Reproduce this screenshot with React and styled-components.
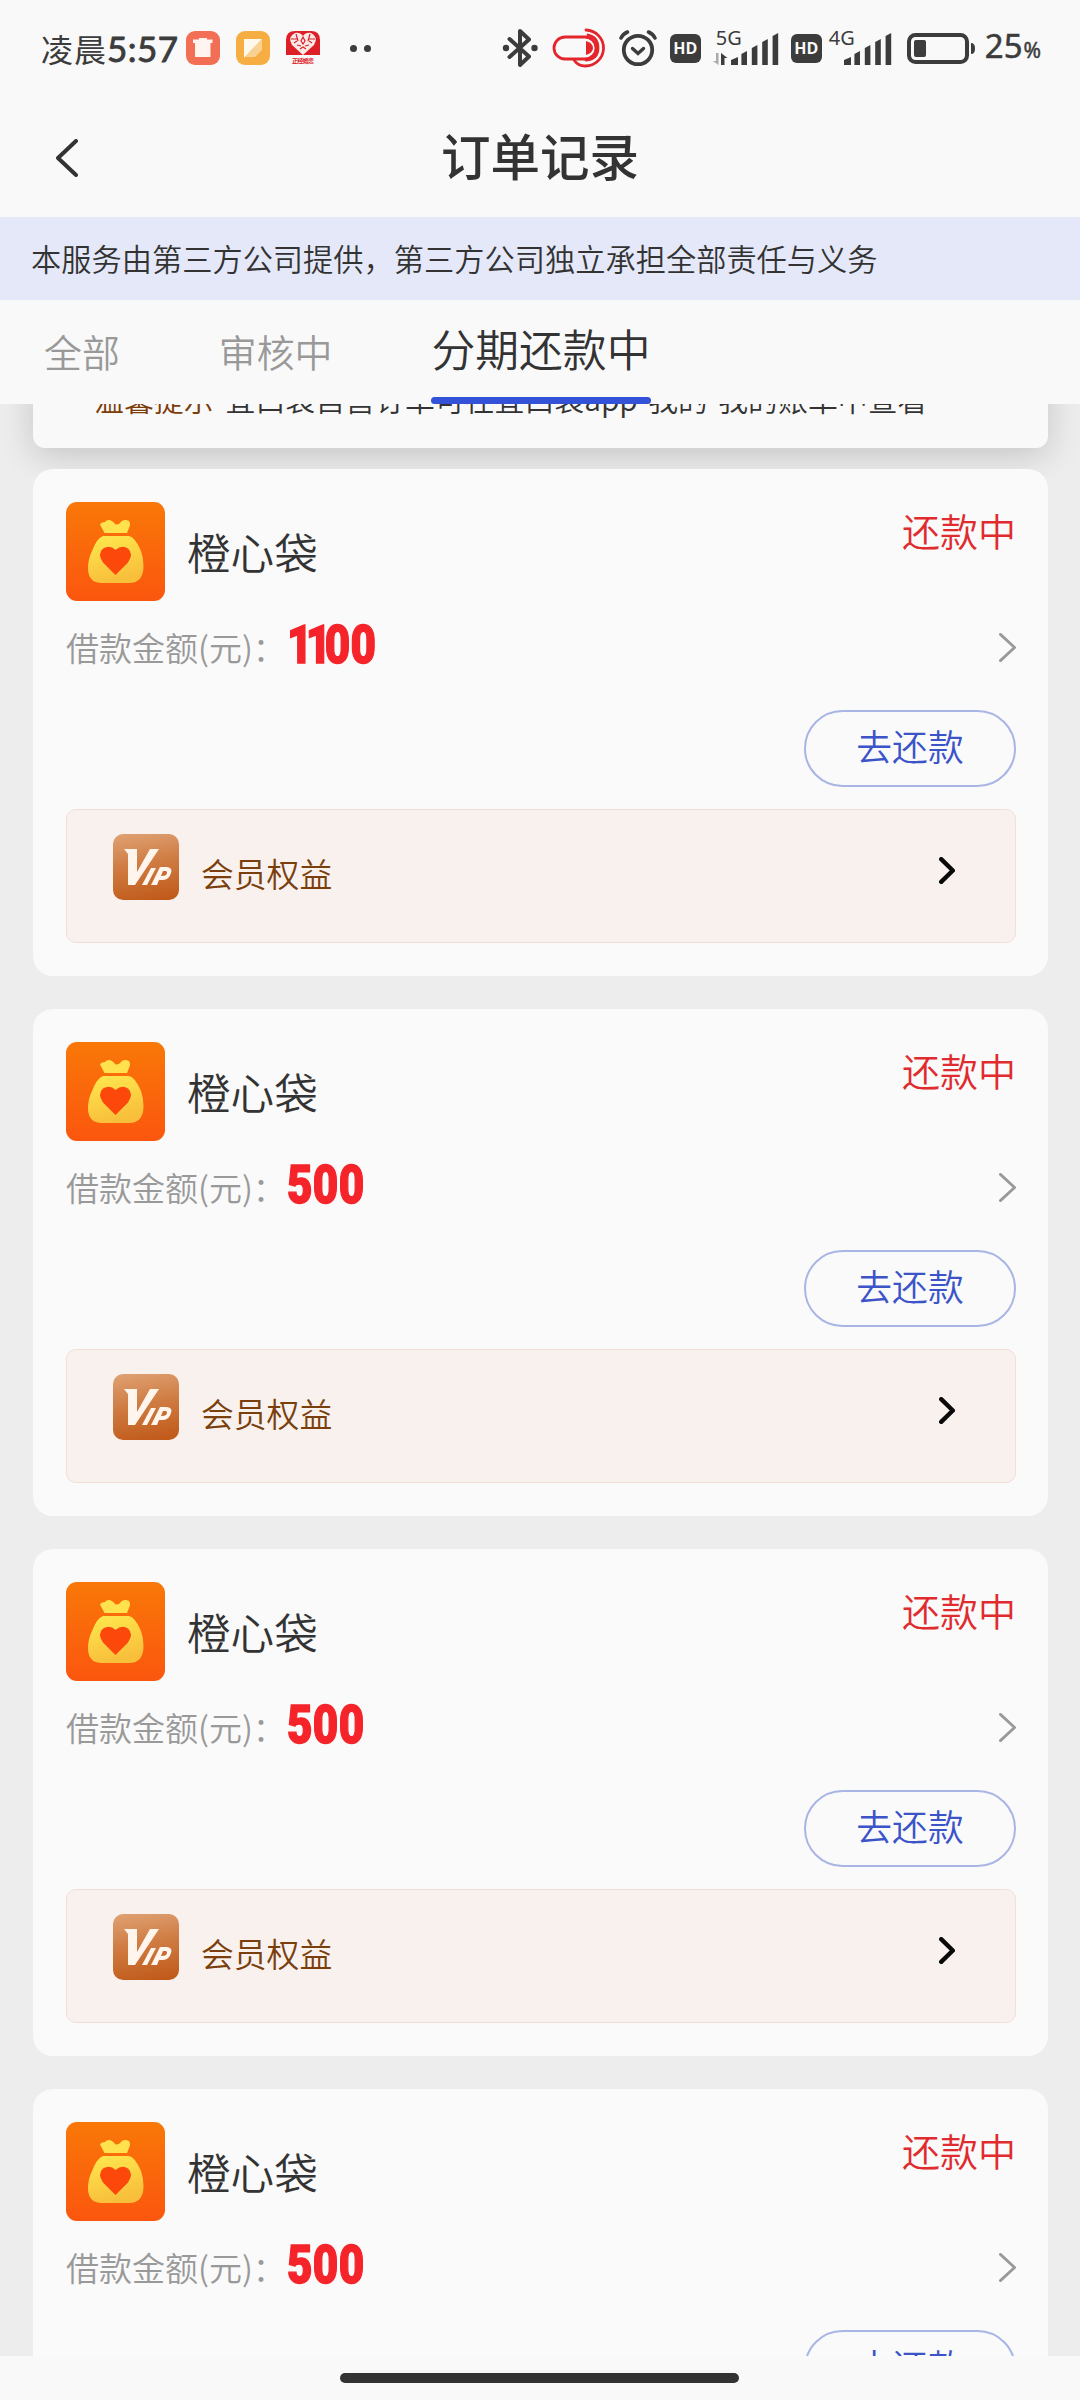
import React from "react";
import styled, { createGlobalStyle } from "styled-components";

const GlobalStyle = createGlobalStyle`
  * { box-sizing: border-box; }
  body {
    margin: 0;
    background: #f9f9f9;
    font-family: "Noto Sans CJK SC", "Noto Sans", sans-serif;
    color: #333;
  }
  svg { display: block; flex: none; }
`;

const Screen = styled.div`
  width: 1080px;
  height: 2400px;
  overflow: hidden;
  display: flex;
  flex-direction: column;
  background: #f9f9f9;
  white-space: nowrap;
`;

const StatusBar = styled.div`
  height: 98px;
  flex: none;
  display: flex;
  align-items: center;
  justify-content: space-between;
  padding: 0 39px 2px 41px;
  color: #3c3c3c;
`;

const StatusGroup = styled.div`
  display: flex;
  align-items: center;
`;

const Clock = styled.div`
  display: flex;
  align-items: center;
  width: 145px;
  line-height: 48px;
  font-size: 32px;
  letter-spacing: 1px;
`;

const ClockDigits = styled.span`
  font-family: Lato, "Noto Sans", sans-serif;
  font-size: 35px;
  font-weight: 400;
  letter-spacing: 0.5px;
  -webkit-text-stroke: 0.9px #3c3c3c;
`;

const AppBadges = styled.div`
  display: flex;
  gap: 16px;
`;

const Dots = styled.div`
  display: flex;
  gap: 7px;
  margin-left: 30px;
`;

const Dot = styled.i`
  width: 7px;
  height: 7px;
  border-radius: 50%;
  background: #3c3c3c;
`;

const HdBadge = styled.div`
  width: 31px;
  height: 29px;
  border-radius: 6px;
  background: #3c3c3c;
  color: #f9f9f9;
  font: 700 16px/28px "Open Sans", sans-serif;
  text-align: center;
  margin-left: ${(p) => p.$gap}px;
`;

const Network = styled.div`
  width: ${(p) => p.$width}px;
  height: 37px;
  display: grid;
  grid-template-areas: "stack";
  margin-left: ${(p) => p.$gap}px;
  margin-bottom: 3px;
  > * { grid-area: stack; }
`;

const NetworkLabel = styled.span`
  font: 400 20px/20px "Noto Sans", sans-serif;
  padding-left: ${(p) => p.$inset}px;
`;

const Percent = styled.div`
  display: flex;
  align-items: baseline;
  margin-left: 9px;
  font: 400 33px/40px "Noto Sans", sans-serif;
  -webkit-text-stroke: 0.5px #3c3c3c;
  small { font-size: 21px; margin-left: 1px; }
`;

const Header = styled.header`
  height: 119px;
  flex: none;
  display: grid;
  grid-template-columns: 120px 1fr 120px;
  align-items: center;
`;

const BackButton = styled.button`
  border: 0;
  background: none;
  padding: 0 0 0 56px;
`;

const PageTitle = styled.h1`
  margin: 0;
  font-size: 49.5px;
  font-weight: 500;
  line-height: 72px;
  padding-bottom: 5px;
  text-align: center;
  color: #333;
`;

const Banner = styled.div`
  height: 83px;
  flex: none;
  padding-left: 31px;
  background: #e5e8f8;
  font-size: 30.24px;
  font-weight: 350;
  line-height: 83px;
  color: #333;
`;

const Tabs = styled.nav`
  height: 104px;
  flex: none;
  display: flex;
  padding-left: 44px;
  background: #f9f9f9;
  position: relative;
  z-index: 1;
`;

const Tab = styled.div`
  display: flex;
  flex-direction: column;
  justify-content: flex-end;
  margin-right: ${(p) => p.$gap}px;
  font-size: ${(p) => (p.$active ? 43.8 : 37.9)}px;
  font-weight: 350;
  color: ${(p) => (p.$active ? "#333" : "#999")};
  span { line-height: ${(p) => (p.$active ? 97 : 106)}px; }
  &::after {
    content: "";
    display: ${(p) => (p.$active ? "block" : "none")};
    height: 8px;
    margin: 0 -1px 0 0;
    border-radius: 4px;
    background: #3352d8;
  }
`;

const Orders = styled.main`
  height: 1952px;
  flex: none;
  overflow: hidden;
  padding: 0 32px 0 33px;
  background: #ededed;
`;

const Notice = styled.div`
  height: 84px;
  margin: -40px 0 21px;
  border-radius: 0 0 12px 12px;
  background: #f9f9f9;
  box-shadow: 0 8px 34px rgba(0, 0, 0, 0.17);
  padding-left: 61px;
  font-size: 29.9px;
  font-weight: 350;
  line-height: 69px;
  display: flex;
  gap: 12px;
`;

const NoticeLead = styled.span`
  color: #7d3d0b;
`;

const Card = styled.article`
  height: 507px;
  margin-bottom: 33px;
  padding: 33px 32px 33px 33px;
  border-radius: 20px;
  background: #fafafa;
`;

const CardHead = styled.div`
  height: 99px;
  display: flex;
  align-items: center;
`;

const BrandName = styled.h2`
  margin: 0 auto 0 22px;
  padding-bottom: 2px;
  font-size: 43.6px;
  font-weight: 350;
  line-height: 60px;
`;

const State = styled.span`
  align-self: flex-start;
  font-size: 38px;
  font-weight: 350;
  line-height: 55px;
  color: #e02b2f;
`;

const AmountRow = styled.div`
  height: 92px;
  display: flex;
  align-items: center;
`;

const AmountLabel = styled.span`
  width: 221px;
  padding-bottom: 1px;
  font-size: 33px;
  font-weight: 350;
  color: #999;
`;

const Amount = styled.strong`
  margin-right: auto;
  font: 900 53px/60px Roboto, sans-serif;
  color: #f5242a;
  padding-bottom: 5px;
  transform: scaleX(0.83);
  transform-origin: left;
  -webkit-text-stroke: 1.4px #f5242a;
`;

const Digits = styled.span`
  letter-spacing: ${(p) => (p.$narrow ? -8 : 0.4)}px;
`;

const Actions = styled.div`
  display: flex;
  justify-content: flex-end;
  margin-top: 17px;
`;

const RepayButton = styled.button`
  width: 212px;
  height: 77px;
  padding: 0 0 8px;
  border: 2px solid #a9b5e4;
  border-radius: 39px;
  background: transparent;
  font: 350 35.8px/50px "Noto Sans CJK SC", sans-serif;
  color: #3c54c8;
`;

const Benefits = styled.div`
  height: 134px;
  margin-top: 22px;
  padding: 24px 60px 0 46px;
  border: 1.5px solid #f3ded5;
  border-radius: 10px;
  background: #f9f1ed;
  display: flex;
  align-items: flex-start;
  justify-content: space-between;
  > svg { margin-top: 23px; }
`;

const BenefitsTitle = styled.div`
  display: flex;
  gap: 22px;
  font-size: 32.8px;
  font-weight: 350;
  color: #7a3f0c;
  span { line-height: 77px; }
`;

const VipBadge = styled.div`
  width: 66px;
  height: 66px;
  border-radius: 10px;
  background: linear-gradient(170deg, #e0a274 0%, #cf7c43 45%, #bf5716 100%);
`;

const HomeArea = styled.footer`
  height: 44px;
  flex: none;
  display: flex;
  padding: 17px 0 0 340px;
`;

const HomeBar = styled.div`
  width: 399px;
  height: 10px;
  border-radius: 5px;
  background: #333;
`;

function Chevron({ width, height, color, stroke, left }) {
  const p = stroke / 2;
  const points = left
    ? `${width - p},${p} ${p},${height / 2} ${width - p},${height - p}`
    : `${p},${p} ${width - p},${height / 2} ${p},${height - p}`;
  return (
    <svg width={width} height={height}>
      <polyline points={points} fill="none" stroke={color} strokeWidth={stroke} strokeLinecap="round" strokeLinejoin="round" />
    </svg>
  );
}

function TrashBadge() {
  return (
    <svg width="34" height="34">
      <rect width="34" height="34" rx="9" fill="#f26f56" />
      <path d="M13 7h8v1.500h5.500v3.500h-2v14h-15.500V12H7V8.500h6z" fill="#fff4f0" />
    </svg>
  );
}

function NoteBadge() {
  return (
    <svg width="34" height="34">
      <rect width="34" height="34" rx="9" fill="#f6ad42" />
      <path d="M8 8h18L8 27z" fill="#fff8ec" />
      <path d="M26 8v11l-7 7H9z" fill="#f9d293" />
    </svg>
  );
}

function HeartBadge() {
  return (
    <svg width="34" height="34">
      <path d="M0 24V9Q0 0 9 0H25Q34 0 34 9V24Z" fill="#dd2028" />
      <path d="M17 24L6 14Q1 6 9 2Q14 1 17 5Q20 1 25 2Q33 6 28 14Z" fill="#fbe9e7" />
      <path d="M10 3l2 7M5 8h6M24 3l-2 7M29 8h-6M17 6l-2 4 2 3 2-3zM11 14l4 1M23 14l-4 1M14 18l3-2 3 2M8 12l3-2M26 12l-3-2" stroke="#dd2028" strokeWidth="1.200" fill="none" />
      <text x="17" y="32" textAnchor="middle" fontSize="6" fontWeight="700" fill="#dd2028" textLength="22">正经婚恋</text>
    </svg>
  );
}

function BluetoothIcon() {
  return (
    <svg width="38" height="40">
      <path d="M7.500 11L27 28.500L18 37V3L27 11.500L7.500 29" fill="none" stroke="#3c3c3c" strokeWidth="4" strokeLinejoin="round" strokeLinecap="round" />
      <circle cx="4" cy="20" r="3.2" fill="#3c3c3c" />
      <circle cx="32.500" cy="20" r="3.2" fill="#3c3c3c" />
    </svg>
  );
}

function PillIcon() {
  return (
    <svg width="54" height="40">
      <g fill="none" stroke="#e3262c" strokeWidth="2.800" strokeLinecap="round">
        <rect x="2" y="9" width="42" height="22" rx="11" />
        <path d="M34 2A18 18 0 0 1 33 38Q26 38 22 32" />
        <path d="M36 7Q46 9 46 20T34 32" />
      </g>
      <path d="M34 13Q41 15 41 20T34 27Z" fill="#e3262c" />
    </svg>
  );
}

function AlarmIcon() {
  return (
    <svg width="40" height="38">
      <g fill="none" stroke="#3c3c3c" strokeLinecap="round">
        <circle cx="20" cy="21" r="14.200" strokeWidth="3.800" />
        <path d="M14.500 19.500L20 24.500L25.500 19.500" strokeWidth="3.400" />
        <path d="M3 9Q5 5 9.500 3M37 9Q35 5 30.500 3" strokeWidth="3.600" />
      </g>
    </svg>
  );
}

function SignalBars({ arrows }) {
  const offset = arrows ? 18 : 15;
  return (
    <svg width={offset + 49} height="37">
      {[7, 13, 19, 25, 31].map((h, i) => (
        <path
          key={h}
          d={`M${offset + i * 10.4} ${37}v${-h + 2}l${i === 0 ? 7 : 5.6} -3v${h + 1}z`}
          fill="#3c3c3c"
        />
      ))}
      {arrows && (
        <>
          <path d="M5.500 25v12l-5.500-4h3v-8z" fill="#aaa" />
          <path d="M8 37V25l6.500 5h-3v7z" fill="#3c3c3c" />
        </>
      )}
    </svg>
  );
}

function BatteryIcon() {
  return (
    <svg width="69" height="31">
      <rect x="2" y="2" width="58" height="27" rx="6.500" fill="none" stroke="#3c3c3c" strokeWidth="4" />
      <rect x="7" y="7" width="12" height="17" rx="2" fill="#3c3c3c" />
      <path d="M64 10q4 0 4 5.500t-4 5.500z" fill="#3c3c3c" />
    </svg>
  );
}

const SystemIcons = styled(StatusGroup)`
  margin-right: 14px;
  gap: 12px;
`;

function MoneyBag() {
  return (
    <svg width="99" height="99" viewBox="0 0 99 99">
      <defs>
        <linearGradient id="tile" x1="0" y1="0" x2="0" y2="1">
          <stop offset="0" stopColor="#f97808" />
          <stop offset="1" stopColor="#fb560e" />
        </linearGradient>
        <linearGradient id="bag" x1="0" y1="0" x2="0.3" y2="1">
          <stop offset="0" stopColor="#ffe94f" />
          <stop offset="1" stopColor="#f8bf3b" />
        </linearGradient>
      </defs>
      <rect width="99" height="99" rx="11" fill="url(#tile)" />
      <path d="M38.500 31L34 22.500Q35 20 39 20Q40 18 43 18Q46 18 49.500 22.500Q53 23 56 19Q59 17 63 19Q65 22 63 26L61 31Z" fill="#ffe24d" />
      <path d="M37 34H63Q69 35 75 49Q77.500 56 77.500 64Q77.500 81 63 81H36Q22 81 22 66Q22 57 26 49Q31 36 37 34Z" fill="url(#bag)" />
      <path d="M49.500 73L37 60.500Q31 52 37 46.500Q44 42.500 49.500 48Q56 42.500 62 46.500Q68 52 62 60.500Z" fill="#fd480c" />
    </svg>
  );
}

function VipMark() {
  return (
    <VipBadge>
      <svg width="66" height="66" viewBox="0 0 66 66">
        <path d="M11 15H24L24 38L37 15H46L22 51H15V20Z" fill="#fff5ed" />
        <path d="M38 34H43L34 51H29Z" fill="#fff5ed" />
        <path d="M47 33H54Q60 34 58 39Q56 46 50 46H46L44 51H38Z" fill="#fff5ed" />
        <path d="M50 37H53Q55 38 53 41Q52 42 48 42Z" fill="#c86b32" />
      </svg>
    </VipBadge>
  );
}

function OrderCard({ amount }) {
  return (
    <Card>
      <CardHead>
        <MoneyBag />
        <BrandName>橙心袋</BrandName>
        <State>还款中</State>
      </CardHead>
      <AmountRow>
        <AmountLabel>借款金额(元)：</AmountLabel>
        <Amount>
          {amount.match(/1+|[^1]+/g).map((run, i) => (
            <Digits key={i} $narrow={run[0] === "1"}>{run}</Digits>
          ))}
        </Amount>
        <Chevron width={17} height={29} color="#999" stroke={2.8} />
      </AmountRow>
      <Actions>
        <RepayButton>去还款</RepayButton>
      </Actions>
      <Benefits>
        <BenefitsTitle>
          <VipMark />
          <span>会员权益</span>
        </BenefitsTitle>
        <Chevron width={16} height={27} color="#0a0a0a" stroke={4.4} />
      </Benefits>
    </Card>
  );
}

const orders = ["1100", "500", "500", "500"];

export default function App() {
  return (
    <Screen>
      <GlobalStyle />
      <StatusBar>
        <StatusGroup>
          <Clock>凌晨<ClockDigits>5:57</ClockDigits></Clock>
          <AppBadges>
            <TrashBadge />
            <NoteBadge />
            <HeartBadge />
          </AppBadges>
          <Dots><Dot /><Dot /></Dots>
        </StatusGroup>
        <StatusGroup>
          <SystemIcons>
            <BluetoothIcon />
            <PillIcon />
            <AlarmIcon />
            <HdBadge $gap={0}>HD</HdBadge>
            <Network $width={67} $gap={0}>
              <NetworkLabel $inset={3}>5G</NetworkLabel>
              <SignalBars arrows />
            </Network>
            <HdBadge $gap={-1}>HD</HdBadge>
            <Network $width={64} $gap={-5}>
              <NetworkLabel $inset={0}>4G</NetworkLabel>
              <SignalBars />
            </Network>
          </SystemIcons>
          <BatteryIcon />
          <Percent>25<small>%</small></Percent>
        </StatusGroup>
      </StatusBar>
      <Header>
        <BackButton aria-label="返回">
          <Chevron left width={22} height={38} color="#333" stroke={4} />
        </BackButton>
        <PageTitle>订单记录</PageTitle>
      </Header>
      <Banner>本服务由第三方公司提供，第三方公司独立承担全部责任与义务</Banner>
      <Tabs>
        <Tab $gap={99}><span>全部</span></Tab>
        <Tab $gap={99}><span>审核中</span></Tab>
        <Tab $active $gap={0}><span>分期还款中</span></Tab>
      </Tabs>
      <Orders>
        <Notice>
          <NoticeLead>温馨提示</NoticeLead>
          <span>宜口袋自营订单可在宜口袋app-我的-我的账单中查看</span>
        </Notice>
        {orders.map((amount, i) => (
          <OrderCard key={i} amount={amount} />
        ))}
      </Orders>
      <HomeArea><HomeBar /></HomeArea>
    </Screen>
  );
}
